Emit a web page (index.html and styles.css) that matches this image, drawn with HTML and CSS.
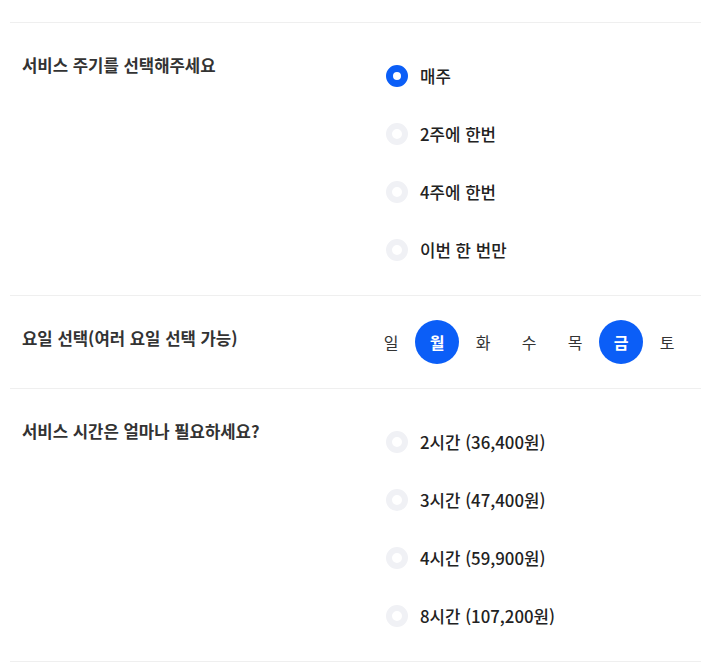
FILE: index.html
```html
<!DOCTYPE html>
<html lang="ko">
<head>
<meta charset="utf-8">
<link rel="stylesheet" href="styles.css">
</head>
<body>
<div class="form">
  <section class="row">
    <h3 class="row-title">서비스 주기를 선택해주세요</h3>
    <div class="options">
      <label class="option"><span class="radio radio--on"></span><span class="option-text">매주</span></label>
      <label class="option"><span class="radio"></span><span class="option-text">2주에 한번</span></label>
      <label class="option"><span class="radio"></span><span class="option-text">4주에 한번</span></label>
      <label class="option"><span class="radio"></span><span class="option-text">이번 한 번만</span></label>
    </div>
  </section>
  <section class="row row--days">
    <h3 class="row-title">요일 선택(여러 요일 선택 가능)</h3>
    <div class="days">
      <span class="day">일</span>
      <span class="day day--on">월</span>
      <span class="day">화</span>
      <span class="day">수</span>
      <span class="day">목</span>
      <span class="day day--on">금</span>
      <span class="day">토</span>
    </div>
  </section>
  <section class="row">
    <h3 class="row-title">서비스 시간은 얼마나 필요하세요?</h3>
    <div class="options">
      <label class="option"><span class="radio"></span><span class="option-text">2시간 (36,400원)</span></label>
      <label class="option"><span class="radio"></span><span class="option-text">3시간 (47,400원)</span></label>
      <label class="option"><span class="radio"></span><span class="option-text">4시간 (59,900원)</span></label>
      <label class="option"><span class="radio"></span><span class="option-text">8시간 (107,200원)</span></label>
    </div>
  </section>
</div>
</body>
</html>
```

FILE: styles.css
```css
* { box-sizing: border-box; }
html, body { margin: 0; padding: 0; background: #fff; }
body {
  font-family: "Noto Sans CJK KR", "Noto Sans", sans-serif;
  color: #222;
}
.form {
  margin: 22px 7px 0 10px;
}
.row {
  display: grid;
  grid-template-columns: 376px 1fr;
  border-top: 1px solid #efefef;
}
.row:last-child { border-bottom: 1px solid #efefef; }
.row-title {
  margin: 0;
  padding: 30px 0 0 12px;
  font-size: 16.7px;
  line-height: 24px;
  font-weight: 700;
  color: #333;
}
.options {
  display: flex;
  flex-direction: column;
  padding: 24px 0 16px;
}
.option {
  height: 58px;
  display: flex;
  align-items: center;
  gap: 12px;
}
.radio {
  width: 22px;
  height: 22px;
  border-radius: 50%;
  border: 6px solid #f0f1f5;
  background: #fff;
  flex: none;
}
.radio--on { border: 7px solid #0b5ef7; }
.option-text {
  font-size: 16.8px;
  font-weight: 500;
  color: #222;
}
.row--days { grid-template-columns: 359px 1fr; }
.days {
  display: flex;
  gap: 2px;
  padding: 24px 0;
}
.day {
  width: 44px;
  height: 44px;
  border-radius: 50%;
  display: flex;
  align-items: center;
  justify-content: center;
  font-size: 16px;
  color: #333;
}
.day--on {
  background: #0b5ef7;
  color: #fff;
  font-weight: 700;
}
```
